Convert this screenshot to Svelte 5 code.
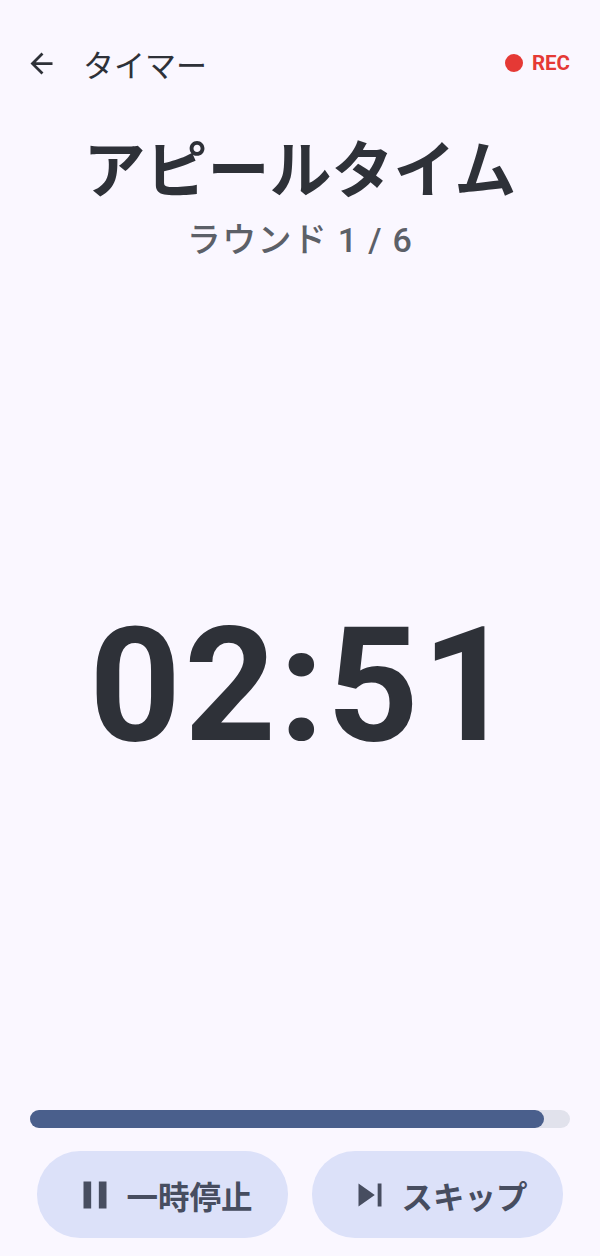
<script>
  let progress = 95.2;
</script>

<div class="screen">
  <header class="topbar">
    <svg class="back" viewBox="0 0 24 24" width="33" height="33">
      <path d="M20 11H7.83l5.59-5.59L12 4l-8 8 8 8 1.41-1.41L7.83 13H20v-2z" />
    </svg>
    <span class="page-title">タイマー</span>
    <div class="rec">
      <span class="dot"></span>
      <span>REC</span>
    </div>
  </header>

  <div class="heading">
    <h1>アピールタイム</h1>
    <p>ラウンド 1 / 6</p>
  </div>

  <div class="clock">02:51</div>

  <div class="footer">
    <div class="track">
      <div class="fill" style="width: {progress}%"></div>
    </div>
    <div class="actions">
      <button>
        <svg viewBox="0 0 24 24" width="46" height="46"><path d="M6 19h4V5H6v14zm8-14v14h4V5h-4z" /></svg>
        <span>一時停止</span>
      </button>
      <button>
        <svg viewBox="0 0 24 24" width="46" height="46"><path d="M6 18l8.5-6L6 6v12zM16 6v12h2V6h-2z" /></svg>
        <span>スキップ</span>
      </button>
    </div>
  </div>
</div>

<style>
  :global(body) {
    margin: 0;
    background: #faf7ff;
  }
  .screen {
    height: 1256px;
    box-sizing: border-box;
    display: flex;
    flex-direction: column;
    padding: 0 30px 18px;
    background: #faf7ff;
    color: #2e3138;
    font-family: Roboto, "Noto Sans CJK JP", sans-serif;
  }
  .topbar {
    display: flex;
    align-items: center;
    height: 36px;
    margin-top: 45px;
  }
  .back {
    fill: #2e3138;
    margin-left: -5px;
  }
  .page-title {
    margin-left: 25px;
    font-size: 31px;
    font-weight: 400;
  }
  .rec {
    margin-left: auto;
    display: flex;
    align-items: center;
    gap: 9px;
    color: #e53935;
    font-size: 20.5px;
    font-weight: 700;
  }
  .dot {
    width: 18px;
    height: 18px;
    border-radius: 50%;
    background: #e53935;
  }
  .heading {
    text-align: center;
    margin-top: 48px;
  }
  h1 {
    margin: 0;
    font-size: 62px;
    line-height: 86px;
    font-weight: 700;
  }
  p {
    margin: 0;
    font-size: 34px;
    line-height: 50px;
    font-weight: 500;
    letter-spacing: 1.3px;
    color: #5c6068;
  }
  .clock {
    flex: 1;
    display: flex;
    align-items: center;
    justify-content: center;
    padding: 0 0 4px 6px;
    font-size: 160px;
    letter-spacing: 3px;
    font-weight: 700;
  }
  .track {
    height: 18px;
    border-radius: 9px;
    background: #e1e2ec;
  }
  .fill {
    height: 100%;
    border-radius: 9px;
    background: #4a5f8c;
  }
  .actions {
    display: flex;
    gap: 24px;
    margin: 23px 7px 0;
  }
  button {
    flex: 1;
    height: 87px;
    border: none;
    border-radius: 43px;
    background: #dce1f9;
    color: #474d60;
    display: flex;
    align-items: center;
    justify-content: center;
    gap: 8px;
    font-family: inherit;
    font-size: 31.5px;
    font-weight: 700;
  }
  button svg {
    fill: #474d60;
    flex-shrink: 0;
  }
</style>
